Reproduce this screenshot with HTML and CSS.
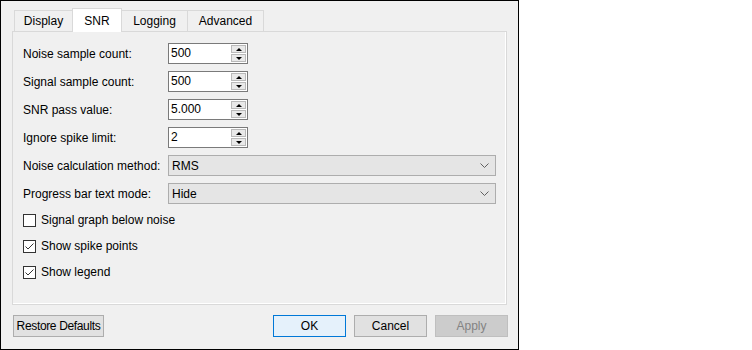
FILE: index.html
```html
<!DOCTYPE html>
<html lang="en">
<head>
<meta charset="UTF-8">
<title>Settings</title>
<link rel="stylesheet" href="styles.css">
</head>
<body>
<div class="dialog">
    <!-- tab bar -->
    <div class="tabs">
        <div class="tab tab-display">Display</div>
        <div class="tab tab-snr active">SNR</div>
        <div class="tab tab-logging">Logging</div>
        <div class="tab tab-advanced">Advanced</div>
    </div>

    <div class="pane">
        <div class="form">
            <label>Noise sample count:</label>
            <div class="spin">
                <span class="spin-value">500</span>
                <div class="spin-btns">
                    <span class="spin-btn"><i class="arrow-up"></i></span>
                    <span class="spin-btn"><i class="arrow-down"></i></span>
                </div>
            </div>

            <label>Signal sample count:</label>
            <div class="spin">
                <span class="spin-value">500</span>
                <div class="spin-btns">
                    <span class="spin-btn"><i class="arrow-up"></i></span>
                    <span class="spin-btn"><i class="arrow-down"></i></span>
                </div>
            </div>

            <label>SNR pass value:</label>
            <div class="spin">
                <span class="spin-value">5.000</span>
                <div class="spin-btns">
                    <span class="spin-btn"><i class="arrow-up"></i></span>
                    <span class="spin-btn"><i class="arrow-down"></i></span>
                </div>
            </div>

            <label>Ignore spike limit:</label>
            <div class="spin">
                <span class="spin-value">2</span>
                <div class="spin-btns">
                    <span class="spin-btn"><i class="arrow-up"></i></span>
                    <span class="spin-btn"><i class="arrow-down"></i></span>
                </div>
            </div>

            <label>Noise calculation method:</label>
            <div class="combo">
                <span>RMS</span>
                <svg width="9" height="5" viewBox="0 0 9 5"><polyline points="0.5,0.5 4.5,4.5 8.5,0.5" fill="none" stroke="#606060" stroke-width="1"/></svg>
            </div>

            <label>Progress bar text mode:</label>
            <div class="combo">
                <span>Hide</span>
                <svg width="9" height="5" viewBox="0 0 9 5"><polyline points="0.5,0.5 4.5,4.5 8.5,0.5" fill="none" stroke="#606060" stroke-width="1"/></svg>
            </div>
        </div>

        <div class="checks">
            <div class="check">
                <span class="box"></span>
                <span>Signal graph below noise</span>
            </div>
            <div class="check">
                <span class="box"><svg width="11" height="11" viewBox="0 0 11 11"><polyline points="1.5,5.5 4,8 9.5,2.5" fill="none" stroke="#333" stroke-width="1"/></svg></span>
                <span>Show spike points</span>
            </div>
            <div class="check">
                <span class="box"><svg width="11" height="11" viewBox="0 0 11 11"><polyline points="1.5,5.5 4,8 9.5,2.5" fill="none" stroke="#333" stroke-width="1"/></svg></span>
                <span>Show legend</span>
            </div>
        </div>
    </div>

    <div class="buttons">
        <button class="btn btn-restore">Restore Defaults</button>
        <div class="btn-group">
            <button class="btn btn-ok">OK</button>
            <button class="btn">Cancel</button>
            <button class="btn btn-disabled">Apply</button>
        </div>
    </div>
</div>
</body>
</html>
```

FILE: styles.css
```css
body {
    margin: 0;
    background-color: #fff;
    font-family: "Liberation Sans", Arial, sans-serif;
    font-size: 12px;
    color: #000;
}

.dialog {
    width: 519px;
    height: 350px;
    box-sizing: border-box;
    border: 1px solid #000;
    background-color: #f0f0f0;
    padding: 7px 10px 0 11px;
}

/* tabs */
.tabs {
    display: flex;
    align-items: flex-end;
    height: 23px;
    padding-left: 2px;
}

.tab {
    position: relative;
    box-sizing: border-box;
    height: 21px;
    line-height: 20px;
    text-align: center;
    border: 1px solid #d9d9d9;
    border-bottom: none;
    background-color: #f0f0f0;
    margin-left: -1px;
}

.tab-display {
    margin-left: 0;
    width: 59px;
}

.tab-snr {
    width: 50px;
}

.tab-logging {
    width: 67px;
}

.tab-advanced {
    width: 77px;
}

.tab.active {
    height: 24px;
    padding-top: 2px;
    margin-bottom: -1px;
    background-color: #fff;
    z-index: 1;
}

/* pane */
.pane {
    box-sizing: border-box;
    width: 495px;
    height: 274px;
    border: 1px solid #d9d9d9;
    box-shadow: inset -1px -1px 0 #fff;
    padding: 11px 10px 0 10px;
}

.form {
    display: grid;
    grid-template-columns: 145px 1fr;
    grid-auto-rows: 21px;
    row-gap: 7px;
    align-items: center;
}

.spin {
    display: flex;
    box-sizing: border-box;
    width: 80px;
    height: 21px;
    border: 1px solid #7a7a7a;
    background-color: #fff;
}

.spin-value {
    flex: 1;
    padding-left: 2px;
    line-height: 19px;
}

.spin-btns {
    display: flex;
    flex-direction: column;
    width: 15px;
    margin: 1px 1px 1px 0;
    gap: 1px;
}

.spin-btn {
    flex: 1;
    box-sizing: border-box;
    border: 1px solid #b9b9b9;
    background-color: #e9e9e9;
    display: flex;
    align-items: center;
    justify-content: center;
}

.arrow-up {
    width: 0;
    height: 0;
    border-left: 3px solid transparent;
    border-right: 3px solid transparent;
    border-bottom: 3px solid #000;
}

.arrow-down {
    width: 0;
    height: 0;
    border-left: 3px solid transparent;
    border-right: 3px solid transparent;
    border-top: 3px solid #000;
}

.combo {
    display: flex;
    align-items: center;
    justify-content: space-between;
    box-sizing: border-box;
    height: 21px;
    border: 1px solid #adadad;
    background-color: #e5e5e5;
    padding: 0 6px 0 3px;
}

/* checkboxes */
.checks {
    display: flex;
    flex-direction: column;
    gap: 6px;
    margin-top: 6px;
}

.check {
    display: flex;
    align-items: center;
    gap: 5px;
    height: 20px;
}

.box {
    box-sizing: border-box;
    width: 13px;
    height: 13px;
    border: 1px solid #333;
    background-color: #fff;
    display: flex;
}

/* bottom buttons */
.buttons {
    display: flex;
    justify-content: space-between;
    margin-top: 10px;
    padding-left: 1px;
    width: 495px;
}

.btn-group {
    display: flex;
    gap: 8px;
}

.btn {
    box-sizing: border-box;
    width: 73px;
    height: 22px;
    padding: 0;
    font-family: inherit;
    font-size: 12px;
    color: #000;
    white-space: nowrap;
    background-color: #e1e1e1;
    border: 1px solid #adadad;
}

.btn-restore {
    width: 91px;
    letter-spacing: -0.35px;
}

.btn-ok {
    background-color: #e5f1fb;
    border-color: #0078d7;
}

.btn-disabled {
    background-color: #cccccc;
    border-color: #bfbfbf;
    color: #838383;
}
```
